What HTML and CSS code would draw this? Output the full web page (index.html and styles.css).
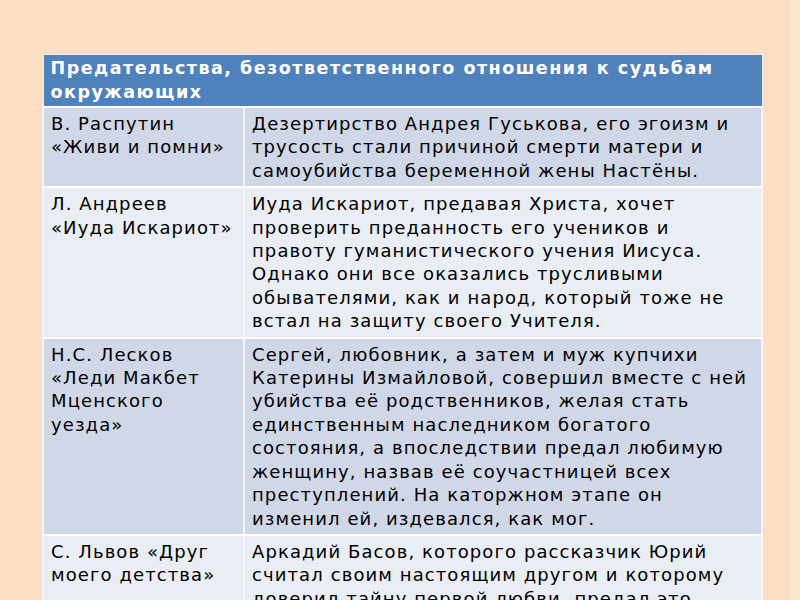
FILE: index.html
```html
<!DOCTYPE html>
<html lang="ru">
<head>
<meta charset="utf-8">
<link rel="stylesheet" href="styles.css">
</head>
<body>
<div class="slide">
<table class="grid">
  <colgroup>
    <col class="col-author">
    <col class="col-desc">
  </colgroup>
  <thead>
    <tr><th colspan="2">Предательства, безответственного отношения к судьбам окружающих</th></tr>
  </thead>
  <tbody>
    <tr class="odd">
      <td class="author">В. Распутин «Живи и помни»</td>
      <td class="desc">Дезертирство Андрея Гуськова, его эгоизм и трусость стали причиной смерти матери и самоубийства беременной жены Настёны.</td>
    </tr>
    <tr class="even">
      <td class="author">Л. Андреев «Иуда Искариот»</td>
      <td class="desc">Иуда Искариот, предавая Христа, хочет проверить преданность его учеников и правоту гуманистического учения Иисуса. Однако они все оказались трусливыми обывателями, как и народ, который тоже не встал на защиту своего Учителя.</td>
    </tr>
    <tr class="odd">
      <td class="author">Н.С. Лесков «Леди Макбет Мценского уезда»</td>
      <td class="desc">Сергей, любовник, а затем и муж купчихи Катерины Измайловой, совершил вместе с ней убийства её родственников, желая стать единственным наследником богатого состояния, а впоследствии предал любимую женщину, назвав её соучастницей всех преступлений. На каторжном этапе он изменил ей, издевался, как мог.</td>
    </tr>
    <tr class="even">
      <td class="author">С. Львов «Друг моего детства»</td>
      <td class="desc">Аркадий Басов, которого рассказчик Юрий считал своим настоящим другом и которому доверил тайну первой любви, предал это доверие.</td>
    </tr>
  </tbody>
</table>
<div class="edge"></div>
</div>
</body>
</html>
```
FILE: styles.css
```css
html, body {
  margin: 0;
  padding: 0;
  width: 800px;
  height: 600px;
  overflow: hidden;
  background: #fbdec4;
}
.slide {
  position: relative;
  width: 800px;
  height: 600px;
  padding: 54px 0 0 42px;
  box-sizing: border-box;
}
.edge {
  position: absolute;
  top: 0;
  right: 0;
  width: 10px;
  height: 600px;
  background: #fde4cd;
}
.grid {
  width: 719px;
  border-collapse: collapse;
  table-layout: fixed;
  font-family: "DejaVu Sans", "Noto Sans", sans-serif;
  color: #000;
}
.col-author {
  width: 201px;
}
.col-desc {
  width: 518px;
}
.grid th {
  background: #4f81bd;
  color: #fff;
  font-weight: bold;
  font-size: 17.5px;
  letter-spacing: 1.5px;
  line-height: 24px;
  text-align: left;
  padding: 1px 6px 2px 7px;
  border: 1px solid #e8eef6;
  border-bottom: 2px solid #fff;
}
.grid td {
  font-size: 18px;
  letter-spacing: 1.1px;
  line-height: 23.4px;
  vertical-align: top;
  padding: 4px 6px 4px 7px;
  border: 2px solid #fff;
  border-left-color: #f2f4f8;
  border-right-color: #f2f4f8;
}
.grid .odd td {
  background: #d0d8e8;
}
.grid .even td {
  background: #e9edf4;
}
```
